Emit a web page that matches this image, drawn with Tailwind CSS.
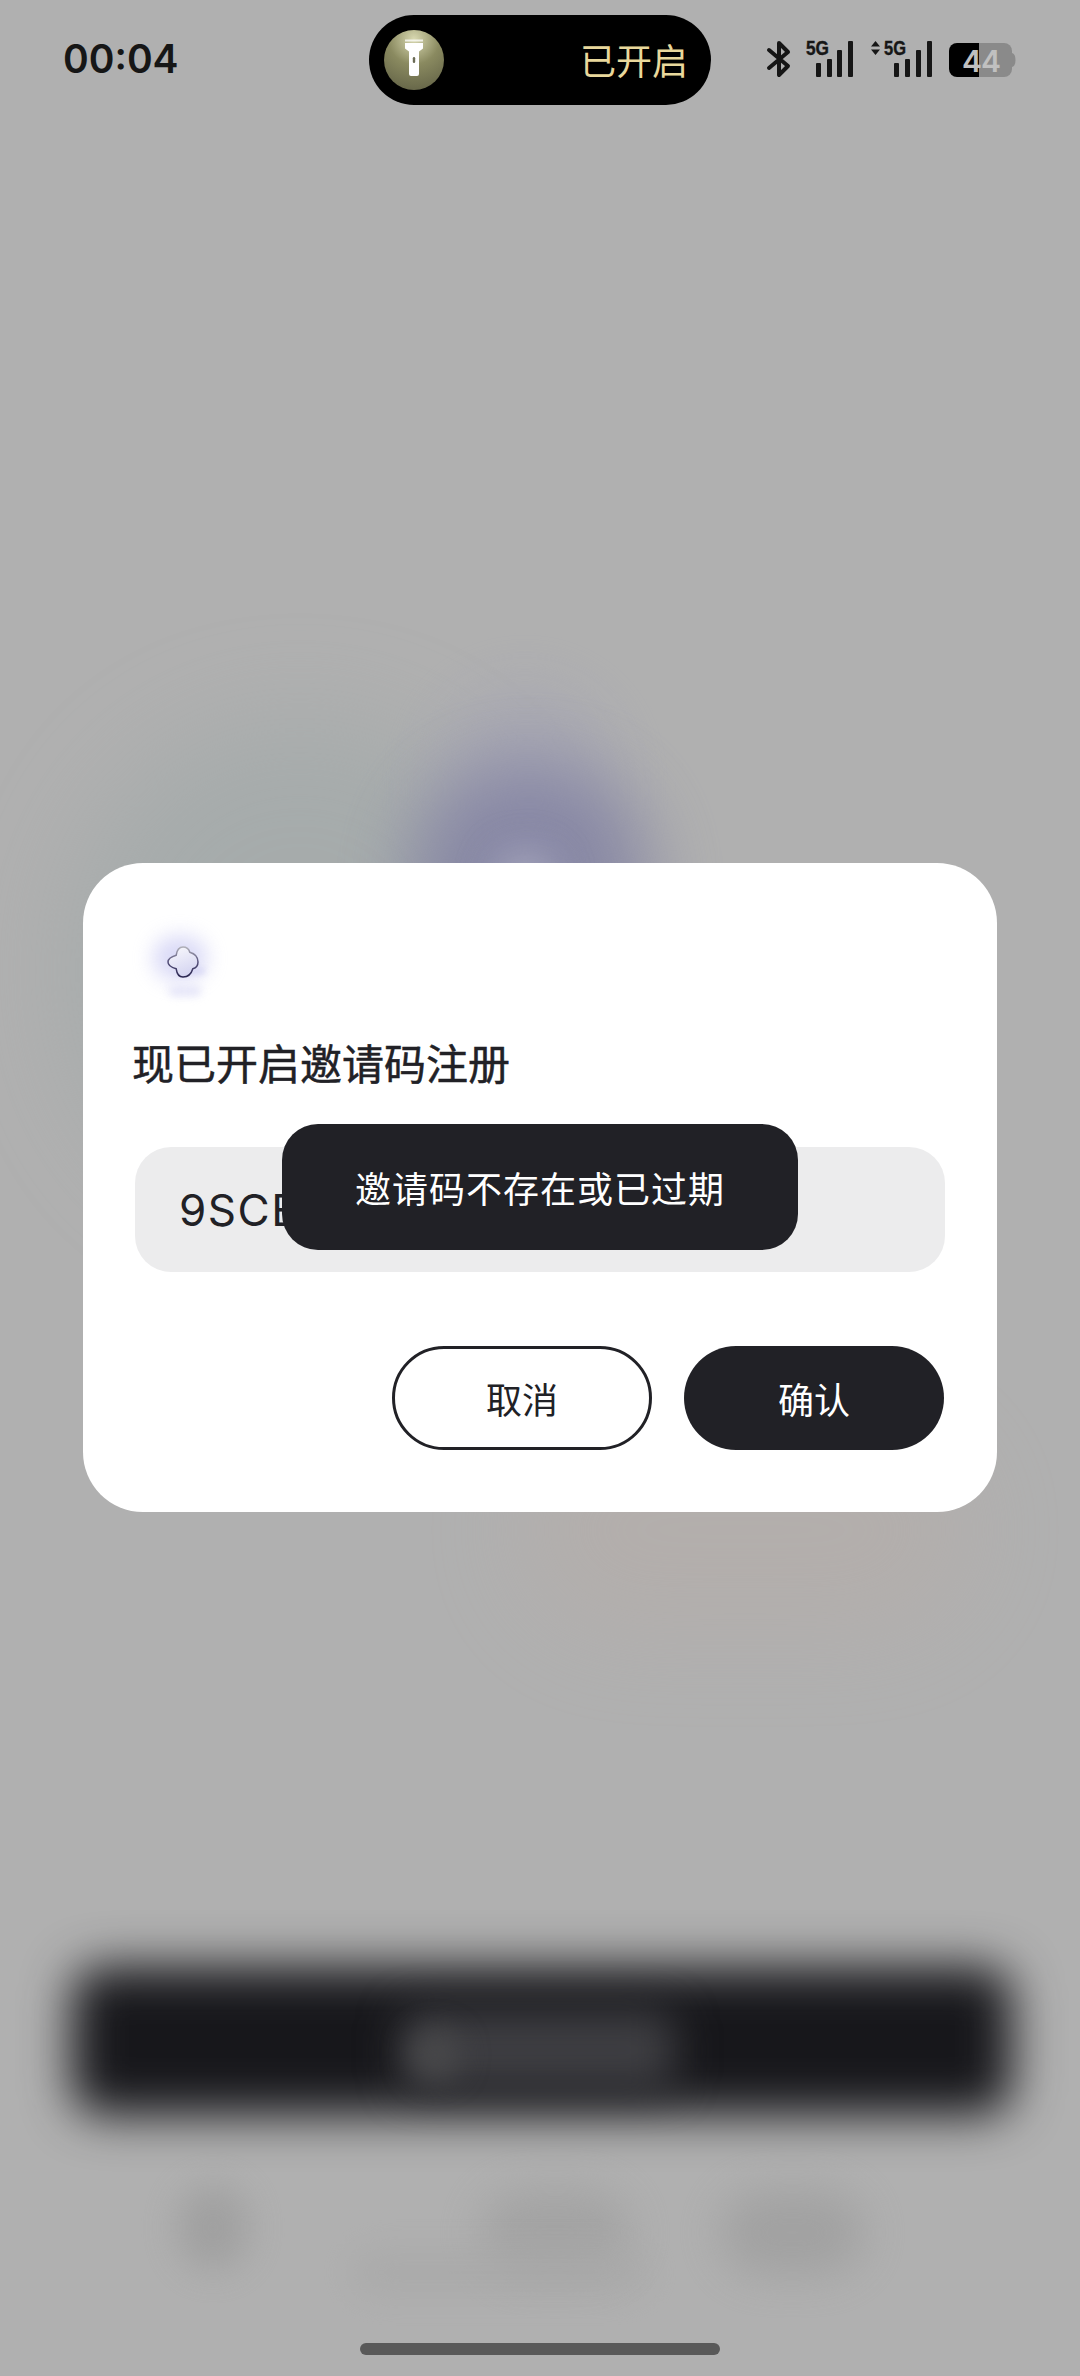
<!doctype html>
<html lang="zh">
<head>
<meta charset="utf-8">
<script src="https://cdn.jsdelivr.net/npm/@tailwindcss/browser@4"></script>
</head>
<body class="m-0">
<div class="relative w-[1080px] h-[2376px] overflow-hidden bg-[#b0b0b0] font-['Noto_Sans_CJK_SC','Noto_Sans',sans-serif]">

  <!-- blurred page behind the dialog -->
  <div class="absolute left-[70px] top-[720px] w-[460px] h-[500px] rounded-full bg-[#9ea8a8] blur-[50px] opacity-55"></div>
  <div class="absolute left-[440px] top-[690px] w-[170px] h-[200px] rounded-[85px] bg-[#a4a4b4] blur-[36px] opacity-70"></div>
  <div class="absolute left-[410px] top-[765px] w-[240px] h-[280px] rounded-[110px] bg-[#8080a2] blur-[36px] opacity-80"></div>
  <div class="absolute left-[495px] top-[850px] w-[60px] h-[120px] rounded-full bg-[#a2a2ba] blur-[18px]"></div>
  <div class="absolute left-[520px] top-[1430px] w-[450px] h-[200px] rounded-full bg-[#b8aca6] blur-[50px] opacity-40"></div>
  <div class="absolute left-[72px] top-[1967px] w-[940px] h-[148px] rounded-[30px] bg-[#17171b] blur-[24px]"></div>
  <div class="absolute left-[400px] top-[2010px] w-[275px] h-[80px] rounded-[20px] bg-[#3e3e42] blur-[20px]"></div>
  <div class="absolute left-[410px] top-[2030px] w-[50px] h-[50px] rounded-full bg-[#48484a] blur-[14px]"></div>
  <div class="absolute left-[178px] top-[2185px] w-[70px] h-[85px] rounded-full bg-[#9c9c9c] blur-[18px] opacity-80"></div>
  <div class="absolute left-[480px] top-[2190px] w-[150px] h-[85px] rounded-full bg-[#a0a0a0] blur-[22px] opacity-80"></div>
  <div class="absolute left-[720px] top-[2190px] w-[145px] h-[85px] rounded-full bg-[#9e9e9e] blur-[22px] opacity-80"></div>
  <div class="absolute left-[350px] top-[2250px] w-[300px] h-[45px] rounded-full bg-[#a8a8a8] blur-[18px] opacity-70"></div>

  <!-- status bar -->
  <div class="relative flex items-center h-[90px] mt-[15px] pl-[63px]">
    <span class="w-[306px] -mt-[3px] text-[39px] leading-none font-semibold font-['Inter',sans-serif] text-[#161616]">00:04</span>
    <div class="flex items-center justify-between w-[342px] h-[90px] rounded-full bg-black pl-[15px] pr-[23px]">
      <svg class="w-[60px] h-[60px]" viewBox="0 0 60 60">
        <defs>
          <radialGradient id="g" cx="50%" cy="15%" r="85%">
            <stop offset="0" stop-color="#d8d8b0"/>
            <stop offset="0.5" stop-color="#8a8a60"/>
            <stop offset="1" stop-color="#68684a"/>
          </radialGradient>
        </defs>
        <circle cx="30" cy="30" r="30" fill="url(#g)"/>
        <path d="M21 13h18v5.500l-4 3V44a2 2 0 0 1-2 2h-6a2 2 0 0 1-2-2V21.500l-4-3z" fill="#fff"/>
        <rect x="21" y="9.500" width="18" height="2" fill="#fff" opacity=".75"/>
        <rect x="28.800" y="27" width="2.400" height="6" rx="1.200" fill="#6b6b55"/>
      </svg>
      <span class="-mt-[3px] text-[36px] leading-none text-[#e9d89c]">已开启</span>
    </div>
    <svg class="self-start mt-[5px] ml-[29px] w-[280px] h-[70px]" viewBox="740 20 280 70">
      <path d="M769 50 L788 66 L779 75 V43 L788 52 L769 68" fill="none" stroke="#161616" stroke-width="4" stroke-linejoin="round" stroke-linecap="round"/>
      <text x="806" y="55" font-family="Liberation Sans" font-weight="700" font-size="20" textLength="23" lengthAdjust="spacingAndGlyphs" fill="#161616" stroke="#161616" stroke-width=".4">5G</text>
      <g fill="#161616">
        <rect x="816" y="63" width="5" height="14" rx="1"/>
        <rect x="827" y="59" width="5" height="18" rx="1"/>
        <rect x="837" y="50" width="5" height="27" rx="1"/>
        <rect x="848" y="41" width="5" height="36" rx="1"/>
        <path d="M875.500 41l4.500 5.500h-9zM875.500 55l4.500-5.500h-9z"/>
        <rect x="894" y="63" width="5" height="14" rx="1"/>
        <rect x="905" y="59" width="5" height="18" rx="1"/>
        <rect x="916" y="50" width="5" height="27" rx="1"/>
        <rect x="927" y="41" width="5" height="36" rx="1"/>
      </g>
      <text x="884" y="55" font-family="Liberation Sans" font-weight="700" font-size="20" textLength="22" lengthAdjust="spacingAndGlyphs" fill="#161616" stroke="#161616" stroke-width=".4">5G</text>
      <path d="M979 43h25a8 8 0 0 1 8 8v18a8 8 0 0 1-8 8h-25z" fill="#8a8a8a"/>
      <path d="M1012 53q3.500 1 3.500 7t-3.500 7z" fill="#8a8a8a"/>
      <path d="M979 43h-22a8 8 0 0 0-8 8v18a8 8 0 0 0 8 8h22z" fill="#000"/>
      <text x="962" y="72" font-family="Inter" font-weight="600" font-size="30" letter-spacing="-1" fill="#c0c0c0">44</text>
    </svg>
  </div>

  <!-- dialog -->
  <div class="relative ml-[83px] mt-[758px] w-[914px] h-[649px] rounded-[60px] bg-white pt-[61px] pl-[49px] pr-[53px]">
    <div class="relative w-[80px] h-[80px] ml-[13px]">
      <div class="absolute left-[8px] top-[12px] w-[54px] h-[44px] rounded-full bg-[#bcbcf0] blur-[10px] opacity-55"></div>
      <div class="absolute left-[30px] top-[44px] w-[30px] h-[6px] rounded-full bg-[#d4d4f4] blur-[3px]"></div>
      <div class="absolute left-[24px] top-[62px] w-[32px] h-[10px] rounded-full bg-[#e4e4f8] blur-[4px]"></div>
      <svg class="absolute left-[22px] top-[22px] w-[32px] h-[32px]" viewBox="0 0 32 32">
        <defs>
          <linearGradient id="c" x1="0.300" y1="0" x2="0.700" y2="1">
            <stop offset="0" stop-color="#f6f6fc"/>
            <stop offset="1" stop-color="#d2d2f0"/>
          </linearGradient>
          <linearGradient id="s" x1="0.500" y1="0" x2="0.500" y2="1">
            <stop offset="0" stop-color="#b0b0b8"/>
            <stop offset="0.500" stop-color="#55507a"/>
            <stop offset="1" stop-color="#2a2650"/>
          </linearGradient>
        </defs>
        <path d="M16 1c3.600 0 6 2.400 6.800 5.200 2.800.8 8.200 3.200 8.200 9.800 0 3.600-2.400 6-5.200 6.800C25 25.600 22.600 31 16 31c-3.600 0-6-2.400-6.800-8.200C6.400 22 1 19.600 1 16c0-3.600 5.400-6 8.200-6.800C10 3.400 12.400 1 16 1z" fill="url(#c)" stroke="url(#s)" stroke-width="1.500"/>
      </svg>
    </div>
    <h2 class="mt-[30px] text-[42px] leading-[56px] font-normal [-webkit-text-stroke:0.5px_#212126] text-[#212126]">现已开启邀请码注册</h2>
    <div class="flex items-center mt-[57px] ml-[3px] w-[810px] h-[125px] rounded-[36px] bg-[#ececed] pl-[44px]">
      <span class="text-[44px] leading-none tracking-[1.5px] font-['Inter',sans-serif] text-[#212126]">9SCE</span>
    </div>
    <div class="flex justify-end gap-[32px] mt-[74px]">
      <button class="w-[260px] h-[104px] rounded-full border-[3px] border-[#212126] bg-white text-[36px] text-[#212126]">取消</button>
      <button class="w-[260px] h-[104px] rounded-full bg-[#212126] text-[36px] text-white">确认</button>
    </div>
  </div>

  <!-- toast -->
  <div class="absolute left-[282px] top-[1124px] flex items-center justify-center w-[516px] h-[126px] rounded-[36px] bg-[#212126] text-[36px] tracking-[1px] text-white">邀请码不存在或已过期</div>

  <!-- home indicator -->
  <div class="absolute left-[360px] top-[2343px] w-[360px] h-[12px] rounded-full bg-[#595959]"></div>
</div>
</body>
</html>
